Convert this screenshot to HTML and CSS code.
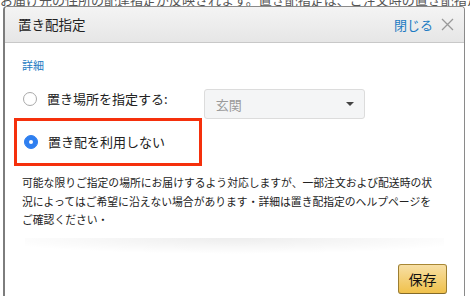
FILE: index.html
```html
<!DOCTYPE html>
<html lang="ja">
<head>
  <meta charset="UTF-8" />
  <title>置き配指定</title>
  <link rel="stylesheet" href="styles.css">
</head>
<body>

  <!-- page text behind the popover -->
  <div class="behind">
    <span>お届け先の住所の配達指定が反映されます。置き配指定は、ご注文時の置き配指定をご利用ください。</span>
  </div>

  <!-- popover -->
  <div class="popover">
    <div class="popover-header">
      <h4>置き配指定</h4>
      <a href="#" class="close">閉じる
        <svg width="13" height="13" viewBox="0 0 13 13"><path d="M1 1L12 12M12 1L1 12" stroke="#999" stroke-width="1.3" fill="none"/></svg>
      </a>
    </div>

    <div class="popover-body">
      <div class="section-title">詳細</div>

      <div class="option-row">
        <label class="option">
          <span class="radio"></span>
          <span>置き場所を指定する:</span>
        </label>
        <div class="select">
          <span>玄関</span>
          <span class="caret"></span>
        </div>
      </div>

      <div class="highlight">
        <label class="option">
          <span class="radio checked"></span>
          <span>置き配を利用しない</span>
        </label>
      </div>

      <p class="note">可能な限りご指定の場所にお届けするよう対応しますが、一部注文および配送時の状況によってはご希望に沿えない場合があります・詳細は置き配指定のヘルプページをご確認ください・</p>
    </div>

    <div class="popover-footer">
      <button class="save">保存</button>
    </div>
  </div>

</body>
</html>
```

FILE: styles.css
```css
body {
  margin: 0;
  background-color: #fff;
  color: #333;
  font-family: "Noto Sans CJK JP", "Noto Sans", sans-serif;
}

/* text of the page under the popover */
.behind {
  height: 6px;
  overflow: hidden;
  white-space: nowrap;
  font-size: 13px;
  line-height: 13px;
  color: #555;
}

.behind span {
  display: block;
  margin-top: -7px;
}

.popover {
  margin-left: 3px;
  width: 459px;
  height: 289px;
  border: 1px solid #8a8a8a;
  border-left: 2px solid #7d7d7d;
  border-bottom: none;
  border-radius: 4px 4px 0 0;
  display: flex;
  flex-direction: column;
}

.popover-header {
  height: 35px;
  background: linear-gradient(#f4f4f4, #e6e6e6);
  border-bottom: 1px solid #c8c8c8;
  border-radius: 3px 3px 0 0;
  display: flex;
  justify-content: space-between;
  align-items: center;
  padding: 0 10px 0 13px;
}

.popover-header h4 {
  margin: 0 0 2px 0;
  font-size: 13.5px;
  font-weight: normal;
  color: #222;
}

.close {
  display: flex;
  align-items: center;
  gap: 8px;
  font-size: 13px;
  color: #1b7bc2;
  text-decoration: none;
}

.popover-body {
  padding: 14px 17px 0 17px;
}

.section-title {
  font-size: 11px;
  line-height: 16px;
  color: #1b7bc2;
}

.option-row {
  display: flex;
  align-items: flex-start;
  margin-top: 15px;
  height: 30px;
}

.option {
  display: flex;
  align-items: center;
  gap: 10px;
  font-size: 13px;
  line-height: 22px;
  color: #222;
  padding-left: 1px;
}

.radio {
  width: 12px;
  height: 12px;
  border: 1px solid #a9a9a9;
  border-radius: 50%;
  background-color: #fff;
  display: flex;
  align-items: center;
  justify-content: center;
}

.radio.checked {
  background-color: #2f7ff0;
  border-color: #2f7ff0;
}

.radio.checked::after {
  content: "";
  width: 4px;
  height: 4px;
  border-radius: 50%;
  background-color: #fff;
}

.select {
  margin-left: 36px;
  margin-top: 1px;
  width: 138px;
  height: 28px;
  background-color: #f4f5f6;
  border: 1px solid #dcdcdc;
  border-radius: 3px;
  display: flex;
  justify-content: space-between;
  align-items: center;
  padding: 0 10px 0 11px;
  font-size: 13px;
  color: #9a9a9a;
}

.caret {
  width: 0;
  height: 0;
  border-left: 4px solid transparent;
  border-right: 4px solid transparent;
  border-top: 4px solid #444;
}

.highlight {
  margin-left: -8px;
  width: 176px;
  height: 42px;
  border: 3px solid #f5300c;
  display: flex;
  align-items: center;
  padding-left: 6px;
}

.note {
  margin: 7px 0 0 0;
  width: 414px;
  font-size: 10.8px;
  line-height: 18.5px;
  color: #222;
}

.popover-footer {
  margin-top: auto;
  height: 56px;
  margin-left: 20px;
  margin-right: 20px;
  background: radial-gradient(ellipse 60% 16px at 50% 0, rgba(0, 0, 0, 0.07), rgba(0, 0, 0, 0));
  display: flex;
  justify-content: flex-end;
  align-items: flex-end;
  padding-bottom: 2px;
}

.save {
  width: 49px;
  height: 30px;
  margin-right: -3px;
  padding: 0;
  background: linear-gradient(#f7dfa5, #f0c14b);
  border: 1px solid;
  border-color: #a88734 #9c7e31 #846a29;
  border-radius: 3px;
  font-family: inherit;
  font-size: 14px;
  color: #111;
}
```
